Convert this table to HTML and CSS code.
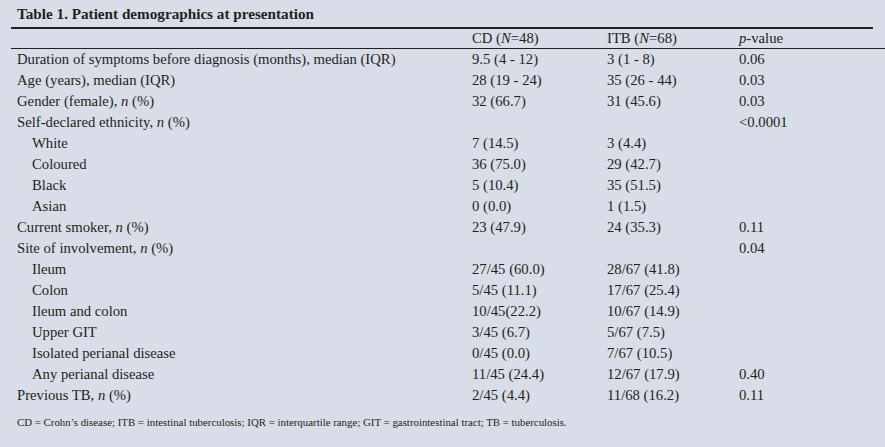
FILE: index.html
```html
<!DOCTYPE html>
<html lang="en">
<head>
<meta charset="utf-8">
<title>Table 1</title>
<link rel="stylesheet" href="styles.css">
</head>
<body>
<div class="wrap">
  <div class="title">Table 1. Patient demographics at presentation</div>
  <div class="row head">
    <div></div>
    <div>CD (<i>N</i>=48)</div>
    <div>ITB (<i>N</i>=68)</div>
    <div><i>p</i>-value</div>
  </div>
  <div class="body">
    <div class="row"><div>Duration of symptoms before diagnosis (months), median (IQR)</div><div>9.5 (4 - 12)</div><div>3 (1 - 8)</div><div>0.06</div></div>
    <div class="row"><div>Age (years), median (IQR)</div><div>28 (19 - 24)</div><div>35 (26 - 44)</div><div>0.03</div></div>
    <div class="row"><div>Gender (female), <i>n</i> (%)</div><div>32 (66.7)</div><div>31 (45.6)</div><div>0.03</div></div>
    <div class="row"><div>Self-declared ethnicity, <i>n</i> (%)</div><div></div><div></div><div>&lt;0.0001</div></div>
    <div class="row sub"><div>White</div><div>7 (14.5)</div><div>3 (4.4)</div><div></div></div>
    <div class="row sub"><div>Coloured</div><div>36 (75.0)</div><div>29 (42.7)</div><div></div></div>
    <div class="row sub"><div>Black</div><div>5 (10.4)</div><div>35 (51.5)</div><div></div></div>
    <div class="row sub"><div>Asian</div><div>0 (0.0)</div><div>1 (1.5)</div><div></div></div>
    <div class="row"><div>Current smoker, <i>n</i> (%)</div><div>23 (47.9)</div><div>24 (35.3)</div><div>0.11</div></div>
    <div class="row"><div>Site of involvement, <i>n</i> (%)</div><div></div><div></div><div>0.04</div></div>
    <div class="row sub"><div>Ileum</div><div>27/45 (60.0)</div><div>28/67 (41.8)</div><div></div></div>
    <div class="row sub"><div>Colon</div><div>5/45 (11.1)</div><div>17/67 (25.4)</div><div></div></div>
    <div class="row sub"><div>Ileum and colon</div><div>10/45(22.2)</div><div>10/67 (14.9)</div><div></div></div>
    <div class="row sub"><div>Upper GIT</div><div>3/45 (6.7)</div><div>5/67 (7.5)</div><div></div></div>
    <div class="row sub"><div>Isolated perianal disease</div><div>0/45 (0.0)</div><div>7/67 (10.5)</div><div></div></div>
    <div class="row sub"><div>Any perianal disease</div><div>11/45 (24.4)</div><div>12/67 (17.9)</div><div>0.40</div></div>
    <div class="row"><div>Previous TB, <i>n</i> (%)</div><div>2/45 (4.4)</div><div>11/68 (16.2)</div><div>0.11</div></div>
  </div>
  <div class="foot">CD = Crohn’s disease; ITB = intestinal tuberculosis; IQR = interquartile range; GIT = gastrointestinal tract; TB = tuberculosis.</div>
</div>
</body>
</html>
```
FILE: styles.css
```css
html, body {
  margin: 0;
  padding: 0;
}
body {
  background: #d9dde7;
  color: #231f20;
  font-family: "Liberation Serif", "Times New Roman", serif;
  font-size: 14.7px;
  width: 885px;
  height: 447px;
  overflow: hidden;
}
.wrap {
  padding-left: 11px;
}
.title {
  width: 856px;
  padding: 4px 0 3px 6px;
  line-height: 20px;
  font-size: 15.2px;
  font-weight: bold;
  border-bottom: 2px solid #231f20;
}
.row {
  display: grid;
  grid-template-columns: 455px 135px 132px 1fr;
  padding-left: 6px;
  height: 21px;
  line-height: 21px;
  white-space: nowrap;
}
.row.head {
  height: 19px;
  line-height: 19px;
  border-bottom: 1px solid #231f20;
}
.row.sub > div:first-child {
  padding-left: 15px;
}
.foot {
  margin-top: 8px;
  padding-left: 6px;
  font-size: 10.85px;
  line-height: 16px;
}
```
